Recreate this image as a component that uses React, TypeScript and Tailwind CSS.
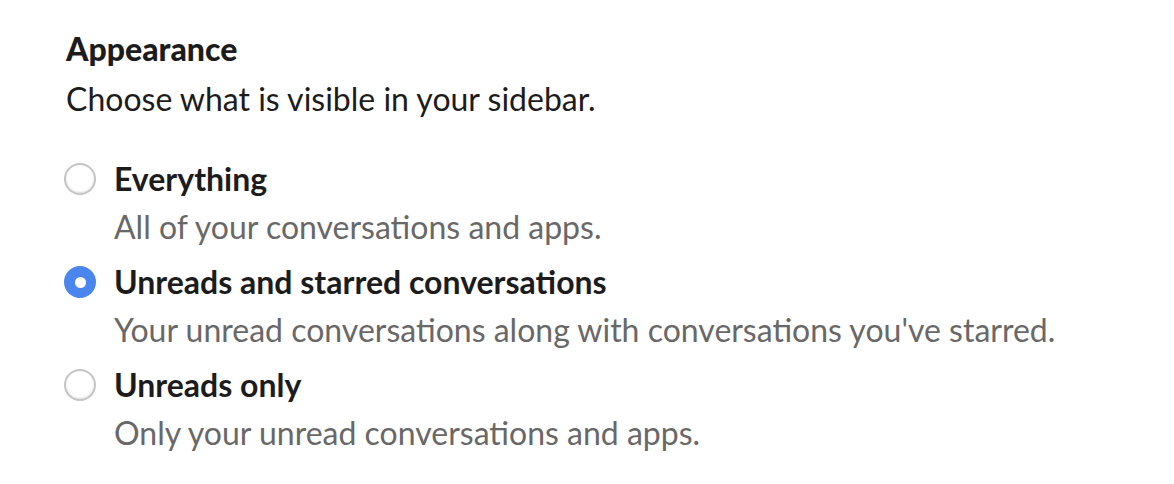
import React, { useState } from 'react';

const options = [
  { id: 'everything', title: 'Everything', desc: 'All of your conversations and apps.' },
  { id: 'starred', title: 'Unreads and starred conversations', desc: "Your unread conversations along with conversations you've starred." },
  { id: 'unreads', title: 'Unreads only', desc: 'Only your unread conversations and apps.' },
];

export default function App() {
  const [selected, setSelected] = useState('starred');

  return (
    <div className="w-[1174px] h-[484px] bg-white pl-[64px] pt-[29px] text-[#1d1c1d] font-['Lato',sans-serif]">
      <h2 className="ml-[2px] text-[32px] leading-[40px] font-black">Appearance</h2>
      <p className="ml-[2px] text-[32px] leading-[40px] mt-[10px]">Choose what is visible in your sidebar.</p>

      <div className="mt-[40px] flex flex-col gap-[15px]">
        {options.map((o) => (
          <label key={o.id} className="flex items-start gap-[18px] cursor-pointer" onClick={() => setSelected(o.id)}>
            {selected === o.id ? (
              <span className="mt-[4px] w-[32px] h-[32px] rounded-full bg-[#4a86ee] flex items-center justify-center shrink-0">
                <span className="w-[11px] h-[11px] rounded-full bg-white" />
              </span>
            ) : (
              <span className="mt-[4px] w-[32px] h-[32px] rounded-full border-2 border-[#c4c4c4] bg-white shadow-[inset_0_-1px_2px_rgba(0,0,0,0.12)] shrink-0" />
            )}
            <div>
              <div className="text-[32px] leading-[40px] font-bold">{o.title}</div>
              <div className="text-[32px] leading-[40px] mt-[8px] text-[#696869]">{o.desc}</div>
            </div>
          </label>
        ))}
      </div>
    </div>
  );
}
